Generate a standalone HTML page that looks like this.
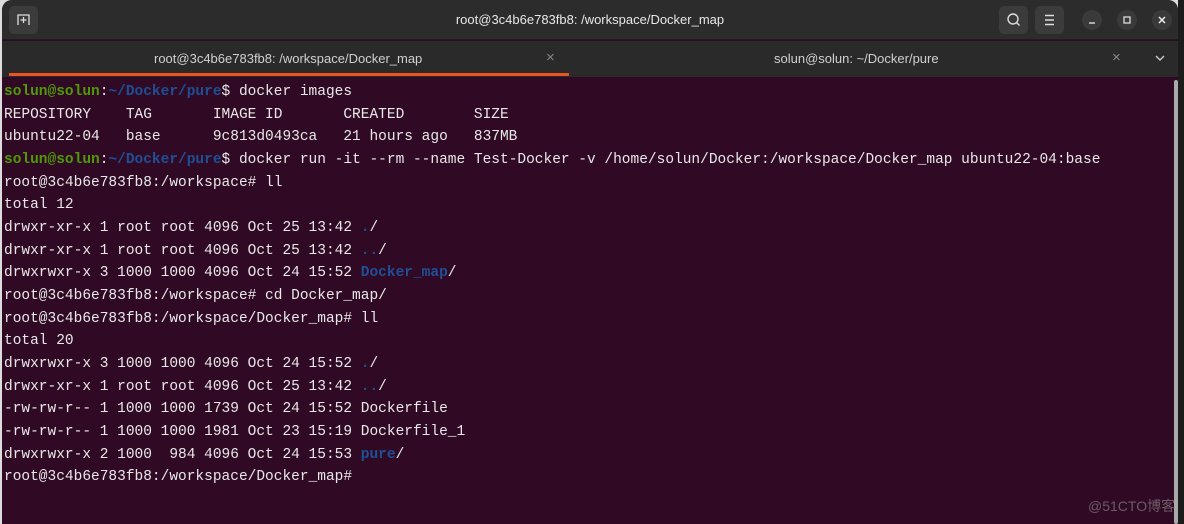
<!DOCTYPE html>
<html><head><meta charset="utf-8"><style>
*{margin:0;padding:0;box-sizing:border-box}
body{width:1184px;height:524px;overflow:hidden;background:#ddd;position:relative;font-family:"Liberation Sans",sans-serif}
.win{position:absolute;left:2px;top:0;width:1176px;height:524px;background:#300a24;border-radius:10px 10px 0 0;overflow:hidden}
.title{position:absolute;left:0;top:0;width:100%;height:40px;background:#2c2c2c;border-bottom:1px solid #1e1e1e}
.title .t{position:absolute;left:0;right:0;top:12px;text-align:center;color:#e8e8e8;font-size:13px}
.btn{position:absolute;top:6px;width:29px;height:28px;background:#3b3b3b;border-radius:5px}
.circ{position:absolute;top:10px;width:20px;height:20px;border-radius:50%;background:#3a3a3a}
.tabs{position:absolute;left:0;top:41px;width:100%;height:36px;background:#2a2a2a}
.tab{position:absolute;top:10px;font-size:13px;color:#d0d0d0}
.x{position:absolute;top:8px;color:#888;font-size:15px}
.ul{position:absolute;left:7px;top:32px;width:560px;height:3px;background:#e95420}
.term{position:absolute;left:2px;top:81px;font-family:"Liberation Mono",monospace;font-size:14.5px;line-height:22.65px;color:#e8e8e8;white-space:pre}
.g{color:#4e9a06;font-weight:bold}.b{color:#1f4f96;font-weight:bold}
.sb{position:absolute;left:1172px;top:80px;width:4px;height:444px;background:#aaa;border-radius:2px}
.wm{position:absolute;left:1088px;top:496px;color:#6e5a66;font-size:14px;font-family:"Liberation Sans","Noto Sans CJK SC",sans-serif}
</style></head><body>
<div style="position:absolute;left:1178px;top:0;width:6px;height:524px;background:#1c1c1c"></div>
<div class="win">
<div class="title">
<div class="btn" style="left:7px"><svg width="29" height="28"><path d="M9 19V9h11v10M14.5 11v6M11.5 14h6" stroke="#ddd" stroke-width="1.3" fill="none"/></svg></div>
<div class="t">root@3c4b6e783fb8: /workspace/Docker_map</div>
<div class="btn" style="left:997px"><svg width="29" height="28"><circle cx="14" cy="13" r="5" stroke="#ddd" stroke-width="1.4" fill="none"/><path d="M17.5 16.5l3 3" stroke="#ddd" stroke-width="1.4"/></svg></div>
<div class="btn" style="left:1033px"><svg width="29" height="28"><path d="M10 9.5h9M10 14h9M10 18.5h9" stroke="#ddd" stroke-width="1.4"/></svg></div>
<div class="circ" style="left:1080px"><svg width="20" height="20"><path d="M7 13h6" stroke="#ddd" stroke-width="1.4"/></svg></div>
<div class="circ" style="left:1115px"><svg width="20" height="20"><rect x="7" y="7" width="6" height="6" stroke="#ddd" stroke-width="1.3" fill="none"/></svg></div>
<div class="circ" style="left:1150px"><svg width="20" height="20"><path d="M7 7l6 6M13 7l-6 6" stroke="#eee" stroke-width="1.5"/></svg></div>
</div>
<div class="tabs">
<div class="tab" style="left:152px">root@3c4b6e783fb8: /workspace/Docker_map</div>
<div class="x" style="left:544px">×</div>
<div class="tab" style="left:772px">solun@solun: ~/Docker/pure</div>
<div class="x" style="left:1110px">×</div>
<svg style="position:absolute;left:1152px;top:12px" width="12" height="10"><path d="M2 3l4 4 4-4" stroke="#ccc" stroke-width="1.4" fill="none"/></svg>
<div class="ul"></div>
</div>
<div class="term"><span class="g">solun@solun</span>:<span class="b">~/Docker/pure</span>$ docker images
REPOSITORY    TAG       IMAGE ID       CREATED        SIZE
ubuntu22-04   base      9c813d0493ca   21 hours ago   837MB
<span class="g">solun@solun</span>:<span class="b">~/Docker/pure</span>$ docker run -it --rm --name Test-Docker -v /home/solun/Docker:/workspace/Docker_map ubuntu22-04:base
root@3c4b6e783fb8:/workspace# ll
total 12
drwxr-xr-x 1 root root 4096 Oct 25 13:42 <span class="b">.</span>/
drwxr-xr-x 1 root root 4096 Oct 25 13:42 <span class="b">..</span>/
drwxrwxr-x 3 1000 1000 4096 Oct 24 15:52 <span class="b">Docker_map</span>/
root@3c4b6e783fb8:/workspace# cd Docker_map/
root@3c4b6e783fb8:/workspace/Docker_map# ll
total 20
drwxrwxr-x 3 1000 1000 4096 Oct 24 15:52 <span class="b">.</span>/
drwxr-xr-x 1 root root 4096 Oct 25 13:42 <span class="b">..</span>/
-rw-rw-r-- 1 1000 1000 1739 Oct 24 15:52 Dockerfile
-rw-rw-r-- 1 1000 1000 1981 Oct 23 15:19 Dockerfile_1
drwxrwxr-x 2 1000  984 4096 Oct 24 15:53 <span class="b">pure</span>/
root@3c4b6e783fb8:/workspace/Docker_map#</div>
<div class="sb"></div>
</div>
<div class="wm">@51CTO博客</div>
</body></html>
